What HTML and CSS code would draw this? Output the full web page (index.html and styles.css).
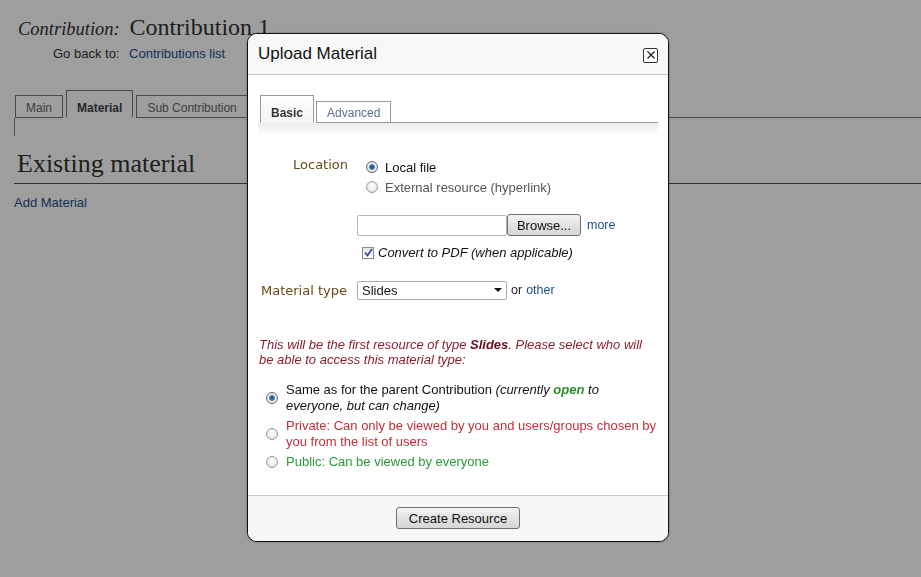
FILE: index.html
```html
<!DOCTYPE html>
<html>
<head>
<meta charset="utf-8">
<link rel="stylesheet" href="styles.css">
</head>
<body>
<div class="page">
  <div class="title-row">
    <span class="title-label">Contribution:</span>
    <span class="title-value">Contribution 1</span>
  </div>
  <div class="back-row">
    <span class="back-label">Go back to:</span>
    <a class="link" href="#">Contributions list</a>
  </div>
  <div class="tabs">
    <div class="tab">Main</div>
    <div class="tab tab-active">Material</div>
    <div class="tab">Sub Contribution</div>
    <div class="tab-fill"></div>
  </div>
  <div class="tab-body"></div>
  <h2 class="section-title">Existing material</h2>
  <a class="link add-link" href="#">Add Material</a>
</div>

<div class="overlay"></div>

<div class="dialog">
  <div class="dlg-header">
    <span class="dlg-title">Upload Material</span>
    <span class="dlg-close">
      <svg width="10" height="10" viewBox="0 0 10 10"><path d="M1.5 1.5 L8.5 8.5 M8.5 1.5 L1.5 8.5" stroke="#222" stroke-width="1.3"/></svg>
    </span>
  </div>
  <div class="dlg-body">
    <div class="inner-tabs">
      <div class="itab itab-active">Basic</div>
      <div class="itab">Advanced</div>
      <div class="itab-fill"></div>
    </div>
    <div class="shade"></div>

    <div class="form-row loc-row">
      <div class="label loc-label">Location</div>
      <div class="loc-options">
        <div class="radio-line"><span class="radio checked"></span><span class="opt-dark">Local file</span></div>
        <div class="radio-line"><span class="radio"></span><span class="opt-gray">External resource (hyperlink)</span></div>
      </div>
    </div>

    <div class="file-row">
      <span class="file-box"></span><span class="btn browse">Browse...</span><a class="link more" href="#">more</a>
    </div>
    <div class="check-row">
      <span class="checkbox">
        <svg width="9" height="9" viewBox="0 0 9 9"><path d="M1 4.5 L3.5 7.5 L8 1" fill="none" stroke="#3a4fa0" stroke-width="1.8"/></svg>
      </span>
      <span class="check-text">Convert to PDF (when applicable)</span>
    </div>

    <div class="type-row">
      <div class="label type-label">Material type</div>
      <div class="select"><span>Slides</span><span class="caret"></span></div>
      <span class="or">or</span> <a class="link" href="#">other</a>
    </div>

    <p class="notice">This will be the first resource of type <b>Slides</b>. Please select who will be able to access this material type:</p>

    <div class="access">
      <div class="acc-line"><span class="radio checked"></span><span class="acc-text">Same as for the parent Contribution <i>(currently <b class="green">open</b> to everyone, but can change)</i></span></div>
      <div class="acc-line"><span class="radio"></span><span class="acc-text red">Private: Can only be viewed by you and users/groups chosen by you from the list of users</span></div>
      <div class="acc-line"><span class="radio"></span><span class="acc-text green">Public: Can be viewed by everyone</span></div>
    </div>
  </div>
  <div class="dlg-footer">
    <span class="btn create">Create Resource</span>
  </div>
</div>
</body>
</html>
```
FILE: styles.css
```css
html, body { margin: 0; padding: 0; background: #fff; }
body { font-family: "Liberation Sans", Arial, sans-serif; font-size: 13px; color: #222; width: 921px; height: 577px; overflow: hidden; }

.page { padding: 14px 0 0 0; }
.title-row { padding-left: 18px; height: 28px; }
.title-label { font-family: "Liberation Serif", serif; font-style: italic; font-size: 18.5px; color: #333; margin-right: 6px; }
.title-value { font-family: "Liberation Serif", serif; font-size: 24px; color: #333; }
.back-row { padding-left: 53px; margin-top: 4px; font-size: 13px; }
.back-label { color: #333; margin-right: 6px; }
.link { color: #1d4f8c; text-decoration: none; }

.tabs { display: flex; align-items: flex-end; margin-top: 29px; padding-left: 14px; height: 28px; }
.tab { border: 1px solid #777; height: 21px; line-height: 24px; padding: 0 10px; margin-left: 1px; background: #fff; color: #666; font-size: 12px; }
.tab + .tab { margin-left: 3px; }
.tab-active { height: 26px; line-height: 34px; font-weight: bold; color: #444; border-bottom: 1px solid #fff; }
.tab-fill { flex: 1; border-bottom: 1px solid #777; }
.tab-body { margin-left: 14px; height: 18px; border-left: 1px solid #888; }

.section-title { font-family: "Liberation Serif", serif; font-weight: normal; font-size: 26px; color: #333; margin: 13px 0 0 14px; padding: 0 0 4px 3px; border-bottom: 1px solid #555; line-height: 30px; }
.add-link { display: block; margin: 11px 0 0 14px; }

.overlay { position: fixed; left: 0; top: 0; right: 0; bottom: 0; background: rgba(0,0,0,0.38); }

.dialog { position: absolute; left: 247px; top: 33px; width: 420px; height: 507px; border: 1px solid #111; border-radius: 10px; background: #fff; overflow: hidden; display: flex; flex-direction: column; box-shadow: 0 0 2px rgba(0,0,0,0.4); }
.dlg-header { height: 40px; background: #f8f8f8; border-bottom: 1px solid #c8c8c8; display: flex; align-items: center; justify-content: space-between; padding: 0 10px 0 10px; }
.dlg-title { font-size: 17px; color: #111; margin-top: -1px; }
.dlg-close { width: 13px; height: 13px; border: 1px solid #333; border-radius: 2px; display: flex; align-items: center; justify-content: center; margin-top: 2px; background: #fff; }

.dlg-body { flex: 1; padding: 0 10px; position: relative; }
.inner-tabs { display: flex; align-items: flex-end; margin-top: 21px; height: 27px; }
.itab { border: 1px solid #999; border-bottom: 1px solid #999; height: 20px; line-height: 22px; padding: 0 10px; margin-left: 2px; color: #5a6f8c; font-size: 12px; background: #fff; }
.itab-active { margin-left: 2px; height: 26px; line-height: 34px; font-weight: bold; color: #333; border-bottom: 1px solid #f6f6f6; background: linear-gradient(#fff, #f3f3f3); }
.itab-fill { flex: 1; border-bottom: 1px solid #999; }
.shade { height: 14px; background: linear-gradient(rgba(0,0,0,0.07), rgba(0,0,0,0)); }

.form-row { display: flex; }
.label { font-family: "DejaVu Sans", Verdana, sans-serif; font-size: 13px; color: #6a4a16; }
.loc-row { margin-top: 19px; }
.loc-label { width: 90px; text-align: right; line-height: 18px; }
.loc-options { margin-left: 18px; padding-top: 1px; }
.radio-line { display: flex; align-items: center; height: 20px; }
.radio { width: 12px; height: 12px; border-radius: 50%; border: 1px solid #9a9a9a; background: radial-gradient(circle at 50% 40%, #fff, #dcdcdc); box-sizing: border-box; flex: none; display: inline-block; margin-right: 7px; }
.radio.checked { background: radial-gradient(circle, #1e4a7c 0, #3b7fc0 2.5px, #f0f0f0 3.2px, #d8d8d8 6px); border-color: #667; }
.opt-dark { color: #111; font-size: 13px; }
.opt-gray { color: #555; font-size: 13px; }

.file-row { display: flex; align-items: center; margin: 17px 0 0 99px; height: 22px; }
.file-box { width: 148px; height: 19px; border: 1px solid #b5b5b5; border-radius: 2px; background: #fff; }
.btn { display: inline-flex; align-items: center; justify-content: center; border: 1px solid #707070; border-radius: 3px; background: linear-gradient(#f4f4f4, #e2e2e2 50%, #d6d6d6); color: #111; font-size: 13px; box-sizing: border-box; }
.browse { width: 74px; height: 22px; }
.more { margin-left: 6px; font-size: 12.5px; }

.check-row { display: flex; align-items: center; margin: 8px 0 0 104px; height: 17px; }
.checkbox { width: 12px; height: 12px; border: 1px solid #8a8a8a; background: linear-gradient(#e6e6e6, #fff); display: flex; align-items: center; justify-content: center; box-sizing: border-box; margin-right: 4px; }
.check-text { font-style: italic; font-size: 13px; color: #111; }

.type-row { display: flex; align-items: center; margin: 19px 0 0 3px; height: 20px; }
.type-label { width: 96px; }
.select { width: 150px; height: 19px; border: 1px solid #a9a9a9; border-radius: 2px; box-sizing: border-box; display: flex; align-items: center; justify-content: space-between; padding: 0 4px 0 4px; font-size: 13px; color: #111; margin-right: 4px; }
.caret { width: 0; height: 0; border-left: 4px solid transparent; border-right: 4px solid transparent; border-top: 4px solid #111; }
.or { color: #222; margin-right: 4px; font-size: 12.5px; }
.type-row .link { font-size: 12.5px; }

.notice { margin: 37px 0 0 1px; font-style: italic; font-size: 13px; line-height: 15px; color: #8b1e2e; width: 395px; }
.notice b { color: #6a1020; }

.access { margin: 15px 0 0 8px; }
.acc-line { display: flex; align-items: center; margin-bottom: 4px; }
.acc-line .radio { margin-right: 8px; }
.acc-text { font-size: 13px; line-height: 16px; color: #111; width: 380px; }
.acc-text b.green { color: #2e8b2e; }
.red { color: #c0303a; }
.green { color: #2a9a3a; }

.dlg-footer { height: 45px; border-top: 1px solid #c8c8c8; background: #f7f7f7; display: flex; align-items: flex-start; justify-content: center; }
.create { width: 124px; height: 22px; margin-top: 11px; }
```
